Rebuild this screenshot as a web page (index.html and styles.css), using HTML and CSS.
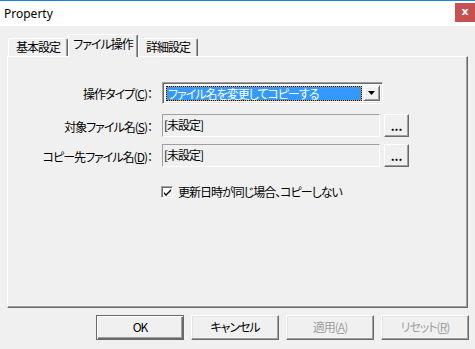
FILE: index.html
```html
<!DOCTYPE html>
<html lang="ja">
<head>
    <meta charset="UTF-8">
    <title>Property</title>
    <link rel="stylesheet" href="styles.css">
</head>
<body>
    <div class="window">
        <div class="titlebar">
            <span class="title">Property</span>
            <span class="close">x</span>
        </div>

        <div class="client">
            <div class="tabs">
                <div class="tab first">基本設定</div>
                <div class="tab active">ファイル操作</div>
                <div class="tab">詳細設定</div>
            </div>

            <div class="panel">
                <div class="row row-type">
                    <label class="label">操作タイプ(<u>C</u>)：</label>
                    <div class="combo">
                        <div class="combo-value">ファイル名を変更してコピーする</div>
                        <div class="combo-btn">
                            <svg width="7" height="4" viewBox="0 0 7 4"><path d="M0 0h7L3.5 4z" fill="#000"/></svg>
                        </div>
                    </div>
                </div>
                <div class="row row-src">
                    <label class="label">対象ファイル名(<u>S</u>)：</label>
                    <div class="field">[未設定]</div>
                    <div class="browse">...</div>
                </div>
                <div class="row">
                    <label class="label">コピー先ファイル名(<u>D</u>)：</label>
                    <div class="field">[未設定]</div>
                    <div class="browse">...</div>
                </div>

                <div class="check-row">
                    <span class="checkbox">
                        <svg width="9" height="9" viewBox="0 0 9 9"><path d="M1 4l2 2 5-5v2L3 8 1 6z" fill="#000"/></svg>
                    </span>
                    <span>更新日時が同じ場合、コピーしない</span>
                </div>
            </div>
        </div>

        <div class="buttons">
            <div class="btn default">OK</div>
            <div class="btn">キャンセル</div>
            <div class="btn disabled">適用(<u>A</u>)</div>
            <div class="btn disabled">リセット(<u>R</u>)</div>
        </div>
    </div>
</body>
</html>
```

FILE: styles.css
```css
body {
    margin: 0;
    padding: 0;
    background: #f0f0f0;
    font-family: "Noto Sans CJK JP", "Noto Sans", sans-serif;
    font-size: 12px;
    font-feature-settings: "palt";
    letter-spacing: -1px;
    color: #000;
}
.window {
    width: 475px;
    height: 349px;
    background: #f0f0f0;
    overflow: hidden;
}
.titlebar {
    height: 25px;
    border-top: 1px solid #1883d7;
    background: #ffffff;
    display: flex;
    align-items: flex-start;
    justify-content: space-between;
}
.title {
    font-family: "Noto Sans", sans-serif;
    font-size: 12px;
    letter-spacing: 0;
    line-height: 14px;
    margin: 6px 0 0 4px;
}
.close {
    width: 20px;
    height: 19px;
    margin-top: 2px;
    background: #c75050;
    color: #fff;
    font-family: "DejaVu Sans", sans-serif;
    font-weight: bold;
    font-size: 11px;
    letter-spacing: 0;
    line-height: 18px;
    text-align: center;
}
.client {
    padding: 8px 7px 0 7px;
}

/* tabs */
.tabs {
    display: flex;
    align-items: flex-end;
    height: 22px;
    padding-left: 1px;
}
.tab {
    position: relative;
    box-sizing: border-box;
    height: 18px;
    width: 60px;
    line-height: 15px;
    text-align: center;
    white-space: nowrap;
    border-top: 1px solid #fff;
    border-left: 1px solid #fff;
    border-right: 1px solid #696969;
    border-radius: 2px 2px 0 0;
    box-shadow: inset -1px 0 #a0a0a0;
}
.tab.active {
    height: 23px;
    width: 70px;
    margin-bottom: -1px;
    padding-top: 1px;
    background: #f0f0f0;
    z-index: 1;
}

/* panel */
.panel {
    box-sizing: border-box;
    height: 252px;
    border-top: 1px solid #fff;
    border-left: 1px solid #fff;
    border-right: 1px solid #696969;
    border-bottom: 1px solid #696969;
    box-shadow: inset -1px -1px #a0a0a0;
    padding-top: 25px;
}
.row {
    display: flex;
    align-items: center;
    height: 23px;
}
.row-type {
    height: 22px;
    margin-bottom: 10px;
}
.row-src {
    margin-bottom: 7px;
}
.label {
    width: 144px;
    margin-right: 10px;
    text-align: right;
    white-space: nowrap;
    line-height: 14px;
    padding-top: 2px;
}
.combo {
    box-sizing: border-box;
    width: 221px;
    height: 22px;
    padding: 2px;
    display: flex;
    background: #fff;
    border-top: 1px solid #a0a0a0;
    border-left: 1px solid #a0a0a0;
    border-right: 1px solid #fff;
    border-bottom: 1px solid #fff;
    box-shadow: inset 1px 1px #696969, inset -1px -1px #e3e3e3;
}
.combo-value {
    flex: 1;
    margin: 1px 1px 0 1px;
    border: 1px dotted #000;
    background: linear-gradient(#3399ff, #3399ff) padding-box, #f0a030 border-box;
    color: #fff;
    line-height: 14px;
    padding-left: 1px;
    white-space: nowrap;
    overflow: hidden;
}
.combo-btn {
    box-sizing: border-box;
    width: 17px;
    background: #f0f0f0;
    border-top: 1px solid #f0f0f0;
    border-left: 1px solid #f0f0f0;
    border-right: 1px solid #696969;
    border-bottom: 1px solid #696969;
    box-shadow: inset 1px 1px #fff, inset -1px -1px #a0a0a0;
    display: flex;
    align-items: center;
    justify-content: center;
}
.field {
    box-sizing: border-box;
    width: 218px;
    height: 23px;
    padding-left: 1px;
    border-top: 1px solid #a0a0a0;
    border-left: 1px solid #a0a0a0;
    border-right: 1px solid #fff;
    border-bottom: 1px solid #fff;
    line-height: 20px;
}
.browse {
    box-sizing: border-box;
    width: 25px;
    height: 23px;
    margin-left: 4px;
    border-top: 1px solid #fff;
    border-left: 1px solid #fff;
    border-right: 1px solid #696969;
    border-bottom: 1px solid #696969;
    box-shadow: inset -1px -1px #a0a0a0;
    text-align: center;
    line-height: 22px;
    font-weight: bold;
    letter-spacing: 0;
}
.check-row {
    display: flex;
    align-items: center;
    margin: 18px 0 0 153px;
    line-height: 14px;
}
.checkbox {
    box-sizing: border-box;
    width: 12px;
    height: 12px;
    margin-right: 5px;
    background: #fff;
    border-top: 1px solid #a0a0a0;
    border-left: 1px solid #a0a0a0;
    border-right: 1px solid #fff;
    border-bottom: 1px solid #fff;
    box-shadow: inset 1px 1px #696969, inset -1px -1px #e3e3e3;
    display: flex;
    align-items: center;
    justify-content: center;
}

/* dialog buttons */
.buttons {
    display: flex;
    justify-content: flex-end;
    gap: 7px;
    padding: 7px 6px 0 0;
}
.btn {
    box-sizing: border-box;
    width: 88px;
    height: 25px;
    text-align: center;
    line-height: 22px;
    border-top: 1px solid #fff;
    border-left: 1px solid #fff;
    border-right: 1px solid #696969;
    border-bottom: 1px solid #696969;
    box-shadow: inset -1px -1px #a0a0a0, inset 1px 1px #e3e3e3;
}
.btn.default {
    border: 1px solid #696969;
    box-shadow: inset 1px 1px #fff, inset -1px -1px #696969, inset -2px -2px #a0a0a0;
}
.btn.disabled {
    color: #a0a0a0;
}
```
